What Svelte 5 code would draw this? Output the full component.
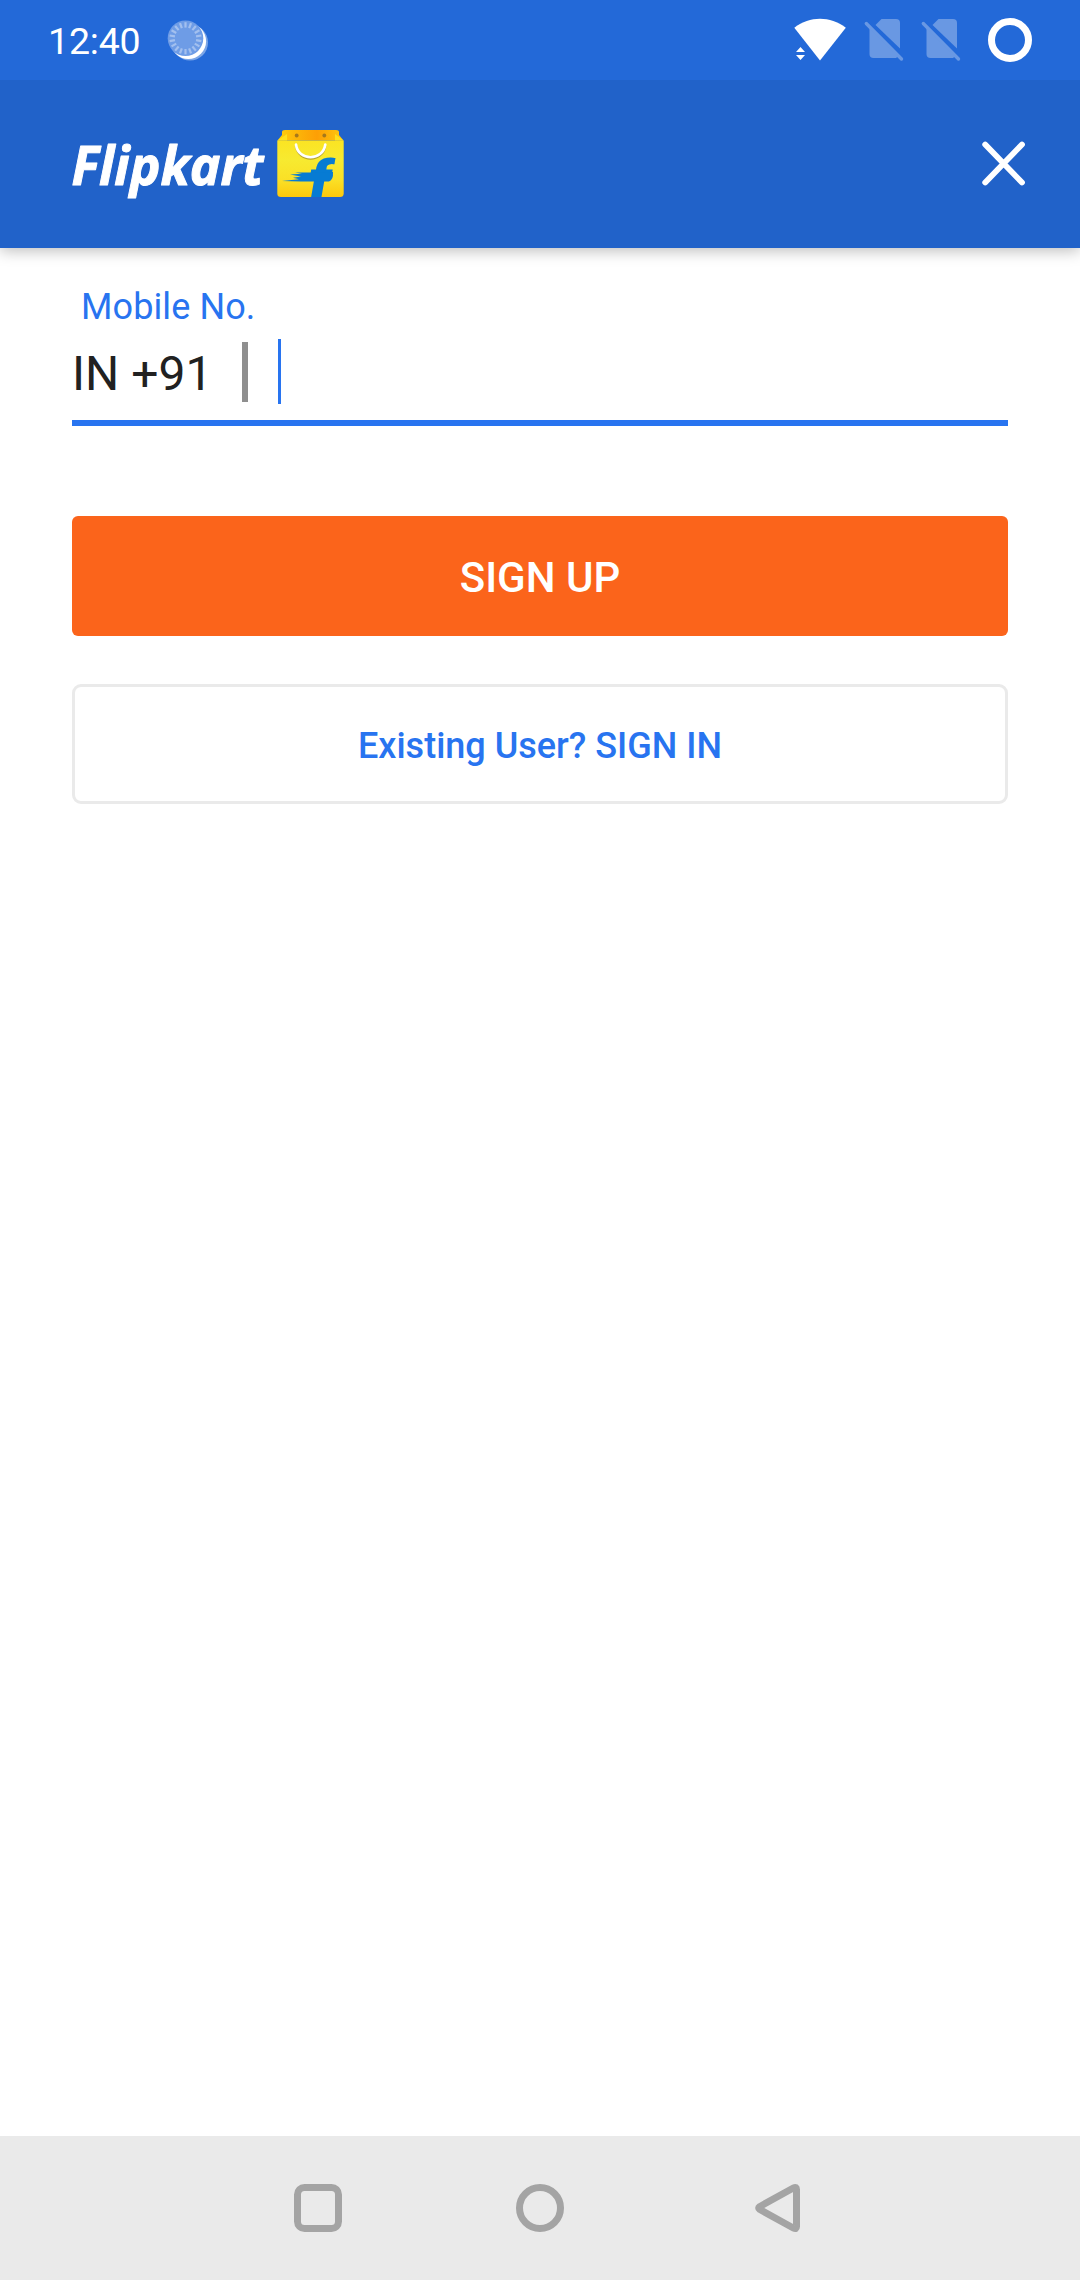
<script>
  let phone = $state('');
  const ticks = Array.from({ length: 18 }, (_, i) => i * 20);
</script>

<main class="screen">
  <div class="status">
    <span class="time">12:40</span>
    <svg class="moon" width="44" height="44" viewBox="0 0 44 44">
      <circle cx="24" cy="24.500" r="18" fill="#fff" opacity=".4" />
      <circle cx="22.300" cy="23.200" r="17.800" fill="#fff" />
      <circle cx="19.500" cy="20.300" r="17.800" fill="#6e9ce6" />
      {#each ticks as angle}
        <path d="M19.500 4.200v5.400" stroke="#a3c0ef" stroke-width="2.200" transform="rotate({angle} 19.500 20.300)" />
      {/each}
    </svg>
    <div class="signals">
      <svg width="54" height="46" viewBox="792 18 54 46">
        <path d="M794.3 28.7C810 16.8 830 16.8 845.8 28.7L820 61.5Z" fill="#fff" />
        <path d="M796 53L800.5 48L805 53ZM796 56L800.5 61L805 56Z" fill="#fff" />
      </svg>
      {#each [0, 1] as sim}
        <svg class="sim" width="40" height="46" viewBox="864 18 40 46">
          <path d="M875.5 26L881.5 20H896Q900 20 900 24V49.5Z" fill="#6998e3" />
          <path d="M869.5 29L898 57.5L896 59H873.5Q869.5 59 869.5 55Z" fill="#6998e3" />
          <path d="M866.3 24.5L901.5 60" stroke="#6998e3" stroke-width="3.4" stroke-linecap="round" />
        </svg>
      {/each}
      <svg class="battery" width="44" height="44" viewBox="0 0 44 44">
        <circle cx="22" cy="22" r="18.5" fill="none" stroke="#fff" stroke-width="7" />
      </svg>
    </div>
  </div>

  <header>
    <svg class="logo" width="280" height="80" viewBox="70 125 280 80">
      <defs>
        <linearGradient id="bag" x1="0" y1="0" x2="0" y2="1">
          <stop offset="0" stop-color="#fbe423" />
          <stop offset=".35" stop-color="#f7ea30" />
          <stop offset=".7" stop-color="#fae026" />
          <stop offset="1" stop-color="#fdc80c" />
        </linearGradient>
        <linearGradient id="fold" x1="0" x2="1">
          <stop offset="0" stop-color="#ffd20a" />
          <stop offset=".25" stop-color="#fcb80a" />
          <stop offset=".6" stop-color="#fd9f05" />
          <stop offset="1" stop-color="#fdca10" />
        </linearGradient>
      </defs>
      <text class="wordmark" x="71.500" y="185" textLength="192" lengthAdjust="spacingAndGlyphs">Flipkart</text>
      <path d="M282 132Q282 130 285 130H336Q339 130 339 132V135L343.500 140.500H277.500L282 135Z" fill="url(#fold)" />
      <path d="M277.500 140.500L287 134V140.500ZM343.500 140.500L335 134V140.500Z" fill="#ffe01b" />
      <path d="M277.300 140.500H343.700V193.500Q343.700 197 340 197H281Q277.300 197 277.300 193.500Z" fill="url(#bag)" />
      <circle cx="296.700" cy="135.500" r="1.900" fill="#a5781c" />
      <circle cx="324.300" cy="135.500" r="1.900" fill="#a5781c" />
      <path d="M296 146C298 163 323 163 325.300 146" fill="none" stroke="#b6a62e" stroke-width="2" />
      <path d="M296 144.500C298 161.500 323 161.500 325.300 144.500" fill="none" stroke="#fff" stroke-width="2.600" stroke-linecap="round" />
      <g fill="#077bd3">
        <text class="mark" transform="translate(306 197) skewX(-10) scale(1.200 1)">f</text>
        <path d="M333 172Q333.500 180 329 181.500H301L282 181L299 179.200L293 177.800L301 176.500L290 174.500L302 173.800L295 172.500H310Z" />
      </g>
    </svg>
    <button class="close" aria-label="Close">
      <svg width="44" height="46" viewBox="0 0 44 46">
        <path d="M3.200 3.500L40 41.500M40 3.500L3.200 41.500" stroke="#fff" stroke-width="5.800" stroke-linecap="round" />
      </svg>
    </button>
  </header>

  <form onsubmit={(e) => e.preventDefault()}>
    <label for="phone">Mobile No.</label>
    <div class="field">
      <span class="code">IN +91</span>
      <span class="divider"></span>
      <span class="caret"></span>
      <input id="phone" type="tel" bind:value={phone} />
    </div>
    <button class="signup">SIGN UP</button>
    <button class="signin" type="button">Existing User? SIGN IN</button>
  </form>

  <nav>
    <svg width="48" height="48" viewBox="0 0 48 48">
      <rect x="3.500" y="3.500" width="41" height="41" rx="7" />
    </svg>
    <svg width="48" height="48" viewBox="0 0 48 48">
      <circle cx="24" cy="24" r="20.500" />
    </svg>
    <svg width="48" height="48" viewBox="0 0 48 48">
      <path d="M4.600 22.700L38.700 3.800Q41.500 2.500 41.500 5.500V42.500Q41.500 45.500 38.700 44.200L4.600 25.300Q2.700 24 4.600 22.700Z" />
    </svg>
  </nav>
</main>

<style>
  :global(body) { margin: 0; background: #fff; }
  .screen {
    width: 1080px;
    height: 2280px;
    display: flex;
    flex-direction: column;
    font-family: Roboto, sans-serif;
    background: #fff;
  }
  svg { display: block; flex: none; overflow: visible; }
  button { font: inherit; padding: 0; border: 0; background: none; }
  .status {
    position: relative;
    z-index: 1;
    height: 80px;
    box-sizing: border-box;
    padding: 0 48px;
    display: flex;
    align-items: center;
    background: #2369d8;
    color: #fff;
  }
  .time { width: 118px; font-size: 37.5px; line-height: 44px; padding-top: 2px; box-sizing: border-box; letter-spacing: -.2px; }
  .signals { margin-left: auto; display: flex; align-items: center; }
  .sim { margin-left: 17px; }
  .signals svg:first-child + .sim { margin-left: 18px; }
  .battery { margin-left: 27px; }
  header {
    position: relative;
    height: 168px;
    box-sizing: border-box;
    padding: 0 54px 0 70px;
    display: flex;
    justify-content: space-between;
    align-items: center;
    background: #2162c9;
    box-shadow: 0 3px 14px rgba(0, 0, 0, .26);
  }
  .logo { margin-top: 2px; }
  .wordmark {
    font: italic 700 54px "Open Sans", sans-serif;
    fill: #fff;
    stroke: #fff;
    stroke-width: 1;
    stroke-linejoin: round;
  }
  .mark { font: 900 52px Roboto, sans-serif; }
  form { flex: 1; padding: 35px 72px 0; display: flex; flex-direction: column; }
  label { padding-left: 9px; font-size: 36px; line-height: 48px; color: #2874f0; letter-spacing: .1px; }
  .field {
    height: 95px;
    box-sizing: border-box;
    border-bottom: 6px solid #2874f0;
    padding-top: 8px;
    display: flex;
    align-items: flex-start;
  }
  .code { width: 170px; font-size: 48px; line-height: 70px; color: #212121; }
  .divider { width: 6px; height: 60px; margin-top: 3px; background: #8f8f8f; }
  .caret { width: 3px; height: 65px; margin-left: 30px; background: #2874f0; }
  input {
    flex: 1;
    height: 65px;
    border: 0;
    outline: 0;
    padding: 0;
    font: 48px Roboto, sans-serif;
    background: none;
  }
  .signup, .signin { height: 120px; box-sizing: border-box; border-radius: 6px; font-weight: 500; }
  .signup { margin-top: 90px; background: #fb641b; color: #fff; font-size: 42px; padding-top: 2px; }
  .signin {
    margin-top: 48px;
    border: 3px solid #eaeaea;
    border-radius: 9px;
    color: #2874f0;
    font-size: 36px;
    padding-top: 3px;
  }
  nav {
    height: 144px;
    display: flex;
    justify-content: center;
    align-items: center;
    gap: 174px;
    background: #eaeaea;
  }
  nav svg { fill: none; stroke: #a4a4a4; stroke-width: 7; }
  nav svg:last-child { margin-left: 17px; margin-right: -17px; }
</style>
